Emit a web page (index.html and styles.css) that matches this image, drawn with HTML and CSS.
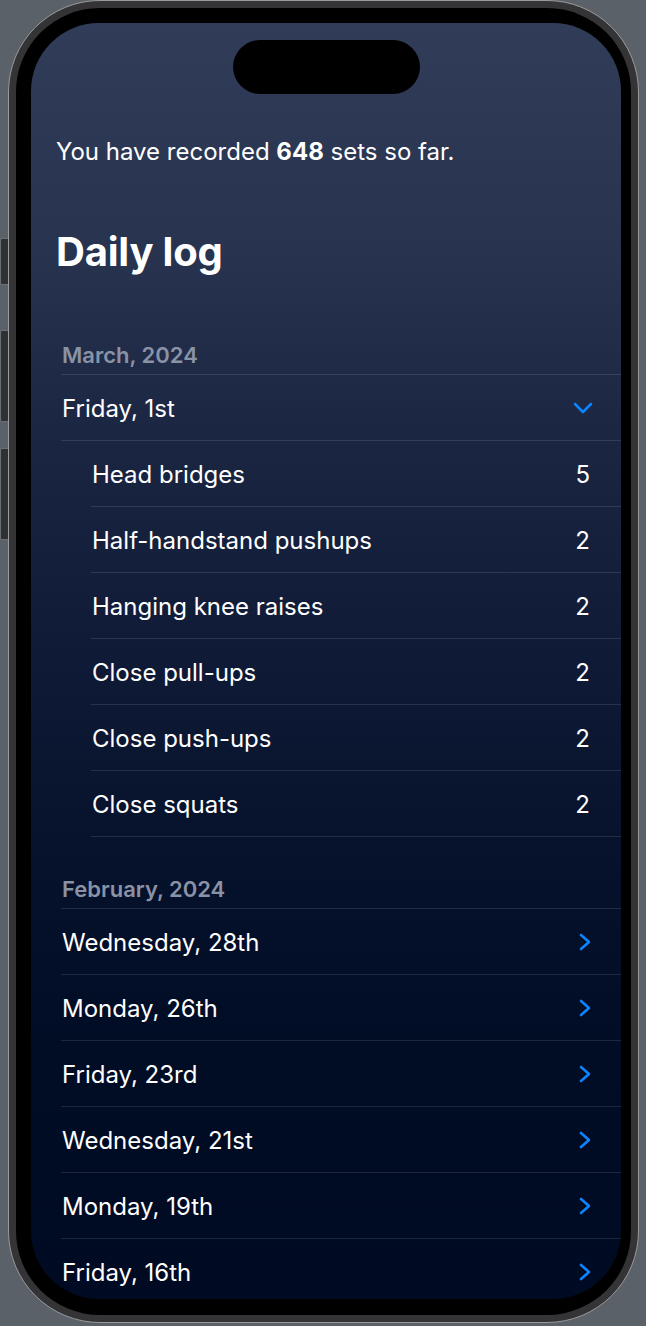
FILE: index.html
```html
<!DOCTYPE html>
<html lang="en">
<head>
<meta charset="utf-8">
<title>Daily log</title>
<link rel="stylesheet" href="styles.css">
</head>
<body>
<div class="stage">
  <div class="buttons">
    <span class="btn btn-action"></span>
    <span class="btn btn-vol"></span>
    <span class="btn btn-vol2"></span>
  </div>
  <div class="device">
    <div class="bezel">
      <div class="screen">
        <div class="island"></div>
        <p class="summary">You have recorded <strong>648</strong> sets so far.</p>
        <h1 class="title">Daily log</h1>

        <section class="month">
          <h2 class="month-title">March, 2024</h2>
          <div class="row day open">
            <span>Friday, 1st</span>
            <svg class="chev-down" width="20" height="12" viewBox="0 0 20 12"><path d="M2 2 L10 10 L18 2" fill="none" stroke="#0a84ff" stroke-width="2.6" stroke-linecap="round" stroke-linejoin="round"/></svg>
          </div>
          <div class="sets">
            <div class="row set"><span>Head bridges</span><span class="num">5</span></div>
            <div class="row set"><span>Half-handstand pushups</span><span class="num">2</span></div>
            <div class="row set"><span>Hanging knee raises</span><span class="num">2</span></div>
            <div class="row set"><span>Close pull-ups</span><span class="num">2</span></div>
            <div class="row set"><span>Close push-ups</span><span class="num">2</span></div>
            <div class="row set"><span>Close squats</span><span class="num">2</span></div>
          </div>
        </section>

        <section class="month feb">
          <h2 class="month-title">February, 2024</h2>
          <div class="row day"><span>Wednesday, 28th</span><svg class="chev-right" width="12" height="18" viewBox="0 0 12 18"><path d="M2 2 L10 9 L2 16" fill="none" stroke="#0a84ff" stroke-width="2.6" stroke-linecap="round" stroke-linejoin="round"/></svg></div>
          <div class="row day"><span>Monday, 26th</span><svg class="chev-right" width="12" height="18" viewBox="0 0 12 18"><path d="M2 2 L10 9 L2 16" fill="none" stroke="#0a84ff" stroke-width="2.6" stroke-linecap="round" stroke-linejoin="round"/></svg></div>
          <div class="row day"><span>Friday, 23rd</span><svg class="chev-right" width="12" height="18" viewBox="0 0 12 18"><path d="M2 2 L10 9 L2 16" fill="none" stroke="#0a84ff" stroke-width="2.6" stroke-linecap="round" stroke-linejoin="round"/></svg></div>
          <div class="row day"><span>Wednesday, 21st</span><svg class="chev-right" width="12" height="18" viewBox="0 0 12 18"><path d="M2 2 L10 9 L2 16" fill="none" stroke="#0a84ff" stroke-width="2.6" stroke-linecap="round" stroke-linejoin="round"/></svg></div>
          <div class="row day"><span>Monday, 19th</span><svg class="chev-right" width="12" height="18" viewBox="0 0 12 18"><path d="M2 2 L10 9 L2 16" fill="none" stroke="#0a84ff" stroke-width="2.6" stroke-linecap="round" stroke-linejoin="round"/></svg></div>
          <div class="row day"><span>Friday, 16th</span><svg class="chev-right" width="12" height="18" viewBox="0 0 12 18"><path d="M2 2 L10 9 L2 16" fill="none" stroke="#0a84ff" stroke-width="2.6" stroke-linecap="round" stroke-linejoin="round"/></svg></div>
        </section>
      </div>
    </div>
  </div>
</div>
</body>
</html>
```
FILE: styles.css
```css
* { box-sizing: border-box; }
html, body {
  margin: 0;
  padding: 0;
  background: #5b6169;
  font-family: Inter, "Noto Sans", "Liberation Sans", sans-serif;
}
.stage {
  position: relative;
  width: 646px;
  height: 1326px;
  overflow: hidden;
  display: flex;
  padding-left: 8px;
}
.buttons {
  position: absolute;
  left: 0;
  top: 0;
  width: 10px;
  height: 100%;
}
.btn {
  position: absolute;
  left: 0;
  width: 9px;
  background: #2f3032;
  border: 1px solid #6b6f75;
  border-right: none;
  border-radius: 2px 0 0 2px;
}
.btn-action { top: 238px; height: 47px; }
.btn-vol { top: 330px; height: 92px; }
.btn-vol2 { top: 448px; height: 92px; }

.device {
  position: relative;
  width: 631px;
  height: 1323px;
  border: 1px solid #9a9a9a;
  border-radius: 92px;
  background: #343436;
  padding: 7px;
}
.bezel {
  width: 100%;
  height: 100%;
  background: #000;
  border-radius: 84px;
  padding: 15px 9px 14px 15px;
}
.screen {
  width: 590px;
  height: 1276px;
  border-radius: 68px;
  overflow: hidden;
  background: linear-gradient(180deg, #303c58 0%, #27334f 18%, #1b2643 32%, #0f1a36 50%, #06112b 66%, #010c25 80%, #000b23 100%);
  color: #fff;
  display: flex;
  flex-direction: column;
}
.island {
  align-self: center;
  margin-top: 17px;
  width: 187px;
  height: 54px;
  border-radius: 27px;
  background: #000;
  flex: none;
}
.summary {
  margin: 43px 0 0 25px;
  font-size: 24px;
  line-height: 30px;
}
.summary strong { font-weight: 700; }
.title {
  margin: 61px 0 0 25px;
  font-size: 40px;
  line-height: 48px;
  font-weight: 700;
  letter-spacing: -0.2px;
}
.month {
  margin-left: 30px;
  margin-top: 66px;
}
.month.feb { margin-top: 39px; }
.month-title {
  margin: 0;
  padding: 0 0 6px 1px;
  font-size: 22px;
  line-height: 26px;
  font-weight: 600;
  color: #8a92a5;
}
.row {
  display: flex;
  align-items: center;
  justify-content: space-between;
  height: 66px;
  border-top: 1px solid rgba(255, 255, 255, 0.11);
  font-size: 24px;
  padding: 2px 30px 0 1px;
}
.row.open { border-bottom: 1px solid rgba(255, 255, 255, 0.11); height: 67px; }
.chev-down { margin-right: -2px; margin-top: -2px; }
.chev-right { margin-top: -2px; }
.sets { margin-left: 30px; }
.sets .row:first-child { border-top: none; height: 65px; }
.sets .row:last-child { border-bottom: 1px solid rgba(255, 255, 255, 0.11); height: 67px; }
.num { margin-right: 1px; }
```
